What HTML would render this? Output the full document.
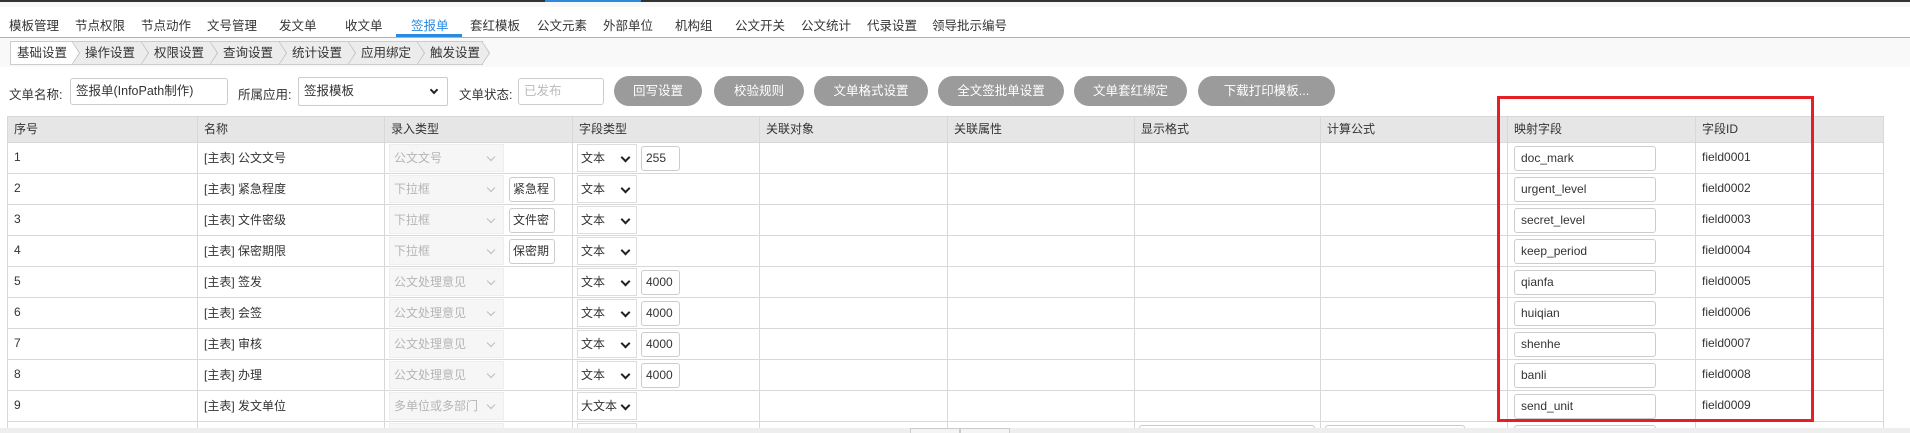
<!DOCTYPE html>
<html style="width:1910px;height:433px;overflow:hidden"><head><meta charset="utf-8"><style>
*{box-sizing:border-box;margin:0;padding:0}
body{width:1910px;height:433px;overflow:hidden;background:#fff;font-family:"Liberation Sans","Noto Sans CJK SC",sans-serif;font-size:12px;color:#333;position:relative}
.abs{position:absolute}
.top{left:0;top:0;width:1910px;height:2px;background:#333}
.topb{left:545px;top:0;width:96px;height:2px;background:#2a8ae0}
.pre{left:0;top:2px;width:1910px;height:5px;background:#f8f8f8}
.nav{left:0;top:7px;width:1910px;height:31px;border-bottom:1px solid #82bdea}
.nav span{position:absolute;top:8px;font-size:12.5px;color:#333}
.nav .act{color:#2a8ae0}
.ul{left:396px;top:34px;width:66px;height:3px;background:#2a8ae0}
.bc{left:0;top:38px;width:1910px;height:29px;background:#f9f9f9}
.bci{position:absolute;top:3px;height:24px;background:#ececec;border:1px solid #ccc;border-right:none;font-size:12.5px;line-height:22px;padding-left:8px}
.bci:after{content:"";position:absolute;right:-8px;top:-1px;border-top:12px solid transparent;border-bottom:12px solid transparent;border-left:8px solid #bbb;z-index:2}
.bci:before{content:"";position:absolute;right:-7px;top:0px;border-top:11px solid transparent;border-bottom:11px solid transparent;border-left:7px solid #ececec;z-index:3}
.bci.f{background:#fff}
.bci.f:before{border-left-color:#fff}
.lbl{top:84px;font-size:12.5px}
.inp{border:1px solid #ccc;border-radius:3px;background:#fff;padding-left:5px;line-height:25px;font-size:12.5px}
.btn{top:76px;height:30px;border-radius:15px;background:#9b9b9b;color:#fff;text-align:center;line-height:30px;font-size:12.5px}
table{position:absolute;left:7px;top:116px;border-collapse:collapse;table-layout:fixed;width:1876px}
td,th{border:1px solid #d8d8d8;height:31px;text-align:left;font-weight:normal;padding:0 0 2px 6px;position:relative;white-space:nowrap;overflow:hidden}
th{background:#e6e6e6;height:26px;font-size:12px}
.sel{position:absolute;left:4px;top:1px;width:115px;height:28px;background:#f6f6f6;border:1px solid #eee;color:#b5b5b5;line-height:26px;padding-left:4px}
.sel:after{content:"";position:absolute;right:9px;top:9px;width:5px;height:5px;border-right:1.5px solid #bbb;border-bottom:1.5px solid #bbb;transform:rotate(45deg)}
.sb{position:absolute;left:124px;top:3px;width:46px;height:25px;border:1px solid #ccc;border-radius:3px;line-height:23px;padding-left:3px;overflow:hidden;background:#fff;white-space:nowrap}
.ft{position:absolute;left:4px;top:1px;width:60px;height:28px;border:1px solid #ddd;line-height:26px;padding-left:3px;background:#fff}
.ft:after{content:"";position:absolute;right:7px;top:9px;width:5px;height:5px;border-right:2px solid #222;border-bottom:2px solid #222;transform:rotate(45deg)}
.fl{position:absolute;left:68px;top:3px;width:39px;height:25px;border:1px solid #ccc;border-radius:3px;line-height:23px;padding-left:4px;background:#fff}
.mi{position:absolute;left:6px;top:3px;width:142px;height:25px;border:1px solid #ccc;border-radius:3px;line-height:23px;padding-left:6px;background:#fff}
.red{left:1497px;top:96px;width:317px;height:326px;border:3px solid #e61e25}
.scr{left:0;top:428px;width:1910px;height:5px;background:#eee}
</style></head><body>
<div class="abs top"></div><div class="abs topb"></div><div class="abs pre"></div>
<div class="abs nav">
<span style="left:9px">模板管理</span><span style="left:75px">节点权限</span><span style="left:141px">节点动作</span><span style="left:207px">文号管理</span><span style="left:279px">发文单</span><span style="left:345px">收文单</span><span class="act" style="left:411px">签报单</span><span style="left:470px">套红模板</span><span style="left:537px">公文元素</span><span style="left:603px">外部单位</span><span style="left:675px">机构组</span><span style="left:735px">公文开关</span><span style="left:801px">公文统计</span><span style="left:867px">代录设置</span><span style="left:932px">领导批示编号</span>
</div>
<div class="abs ul"></div>
<div class="abs bc">
<div class="bci f" style="left:10px;width:62px;padding-left:6px">基础设置</div>
<div class="bci" style="left:72px;width:69px;padding-left:12px">操作设置</div>
<div class="bci" style="left:141px;width:69px;padding-left:12px">权限设置</div>
<div class="bci" style="left:210px;width:69px;padding-left:12px">查询设置</div>
<div class="bci" style="left:279px;width:69px;padding-left:12px">统计设置</div>
<div class="bci" style="left:348px;width:69px;padding-left:12px">应用绑定</div>
<div class="bci" style="left:417px;width:66px;padding-left:12px;border-right:1px solid #ccc">触发设置</div>
</div>
<div class="abs lbl" style="left:9px">文单名称:</div>
<div class="abs inp" style="left:70px;top:78px;width:158px;height:27px">签报单(InfoPath制作)</div>
<div class="abs lbl" style="left:238px">所属应用:</div>
<div class="abs inp" style="left:298px;top:77px;width:150px;height:29px;line-height:27px;border-radius:2px">签报模板<span style="position:absolute;right:10px;top:9px;width:6px;height:6px;border-right:2px solid #222;border-bottom:2px solid #222;transform:rotate(45deg)"></span></div>
<div class="abs lbl" style="left:459px">文单状态:</div>
<div class="abs inp" style="left:518px;top:78px;width:86px;height:27px;color:#bbb">已发布</div>
<div class="abs btn" style="left:614px;width:88px">回写设置</div>
<div class="abs btn" style="left:714px;width:90px">校验规则</div>
<div class="abs btn" style="left:814px;width:114px">文单格式设置</div>
<div class="abs btn" style="left:938px;width:126px">全文签批单设置</div>
<div class="abs btn" style="left:1074px;width:113px">文单套红绑定</div>
<div class="abs btn" style="left:1198px;width:137px">下载打印模板...</div>
<table>
<colgroup><col style="width:190px"><col style="width:187px"><col style="width:188px"><col style="width:187px"><col style="width:188px"><col style="width:187px"><col style="width:186px"><col style="width:187px"><col style="width:188px"><col style="width:188px"></colgroup>
<tr><th>序号</th><th>名称</th><th>录入类型</th><th>字段类型</th><th>关联对象</th><th>关联属性</th><th>显示格式</th><th>计算公式</th><th>映射字段</th><th>字段ID</th></tr>
<tr><td>1</td><td>[主表] 公文文号</td><td><div class="sel">公文文号</div></td><td><div class="ft">文本</div><div class="fl">255</div></td><td></td><td></td><td></td><td></td><td><div class="mi">doc_mark</div></td><td>field0001</td></tr>
<tr><td>2</td><td>[主表] 紧急程度</td><td><div class="sel">下拉框</div><div class="sb">紧急程</div></td><td><div class="ft">文本</div></td><td></td><td></td><td></td><td></td><td><div class="mi">urgent_level</div></td><td>field0002</td></tr>
<tr><td>3</td><td>[主表] 文件密级</td><td><div class="sel">下拉框</div><div class="sb">文件密</div></td><td><div class="ft">文本</div></td><td></td><td></td><td></td><td></td><td><div class="mi">secret_level</div></td><td>field0003</td></tr>
<tr><td>4</td><td>[主表] 保密期限</td><td><div class="sel">下拉框</div><div class="sb">保密期</div></td><td><div class="ft">文本</div></td><td></td><td></td><td></td><td></td><td><div class="mi">keep_period</div></td><td>field0004</td></tr>
<tr><td>5</td><td>[主表] 签发</td><td><div class="sel">公文处理意见</div></td><td><div class="ft">文本</div><div class="fl">4000</div></td><td></td><td></td><td></td><td></td><td><div class="mi">qianfa</div></td><td>field0005</td></tr>
<tr><td>6</td><td>[主表] 会签</td><td><div class="sel">公文处理意见</div></td><td><div class="ft">文本</div><div class="fl">4000</div></td><td></td><td></td><td></td><td></td><td><div class="mi">huiqian</div></td><td>field0006</td></tr>
<tr><td>7</td><td>[主表] 审核</td><td><div class="sel">公文处理意见</div></td><td><div class="ft">文本</div><div class="fl">4000</div></td><td></td><td></td><td></td><td></td><td><div class="mi">shenhe</div></td><td>field0007</td></tr>
<tr><td>8</td><td>[主表] 办理</td><td><div class="sel">公文处理意见</div></td><td><div class="ft">文本</div><div class="fl">4000</div></td><td></td><td></td><td></td><td></td><td><div class="mi">banli</div></td><td>field0008</td></tr>
<tr><td>9</td><td>[主表] 发文单位</td><td><div class="sel">多单位或多部门</div></td><td><div class="ft">大文本</div></td><td></td><td></td><td></td><td></td><td><div class="mi">send_unit</div></td><td>field0009</td></tr>
<tr><td></td><td></td><td><div class="sel"></div></td><td><div class="ft"></div></td><td></td><td></td><td><div class="mi" style="width:176px;left:4px"></div></td><td><div class="mi" style="width:140px;left:4px"></div></td><td><div class="mi"></div></td><td></td></tr>
</table>
<div class="abs red"></div>
<div class="abs scr"></div>
<div class="abs" style="left:910px;top:428px;width:50px;height:5px;border:1px solid #ccc;border-bottom:none;background:#f4f4f4"></div>
<div class="abs" style="left:960px;top:428px;width:50px;height:5px;border:1px solid #ccc;border-bottom:none;background:#f4f4f4"></div>
</body></html>
